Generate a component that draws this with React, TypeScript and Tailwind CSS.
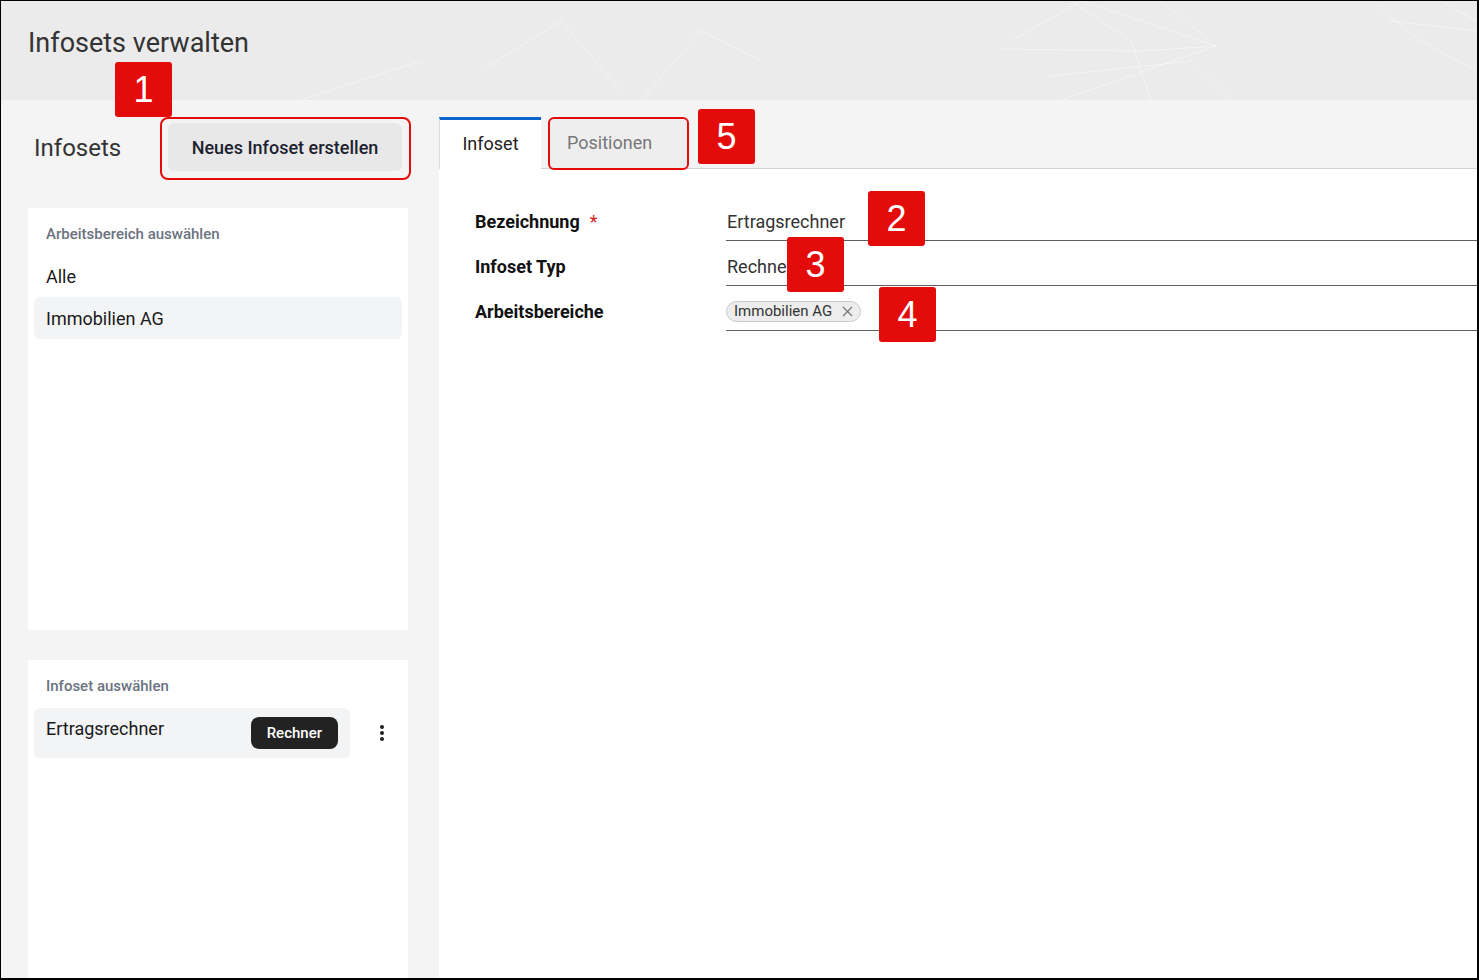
import React from "react";

const Badge = ({ n, className }: { n: string; className: string }) => (
  <div
    className={`absolute w-[57px] h-[55px] rounded-[3px] bg-[#e40b0b] text-white flex items-center justify-center text-[36px] leading-none font-['Liberation_Sans',Arial,sans-serif] ${className}`}
  >
    {n}
  </div>
);

const HeaderLines = () => (
  <svg
    className="absolute inset-0 w-full h-full"
    viewBox="0 0 1476 99"
    preserveAspectRatio="none"
  >
    <g stroke="#ffffff" strokeOpacity="0.45" strokeWidth="1" fill="none">
      <path d="M1010 40 L1080 0 L1215 45 L1060 99" />
      <path d="M1000 48 L1140 50 L1215 45" />
      <path d="M1070 0 L1130 40 L1150 99" />
      <path d="M1160 0 L1210 40" />
      <path d="M1050 75 L1190 60 L1230 99" />
      <path d="M1370 0 L1420 40 L1476 70" />
      <path d="M1390 20 L1476 30" />
      <path d="M1440 0 L1476 20" />
      <path d="M640 99 L700 30 L760 60" />
      <path d="M480 70 L560 20 L620 90" />
      <path d="M300 99 L420 60" />
    </g>
  </svg>
);

const FormRow = ({
  label,
  required,
  children,
}: {
  label: string;
  required?: boolean;
  children: React.ReactNode;
}) => (
  <div className="flex h-[45px]">
    <div className="w-[251px] flex items-center pt-[6px] text-[18px] font-bold text-[#111]">
      {label}
      {required && <span className="ml-[10px] text-[#d21c1c] font-normal">*</span>}
    </div>
    <div className="flex-1 flex items-center pt-[6px] border-b border-[#5f5f5f] text-[18px] text-[#333]">
      {children}
    </div>
  </div>
);

export default function App() {
  return (
    <div className="relative w-[1479px] h-[980px] overflow-hidden border-t border-l border-r-2 border-b-2 border-black flex flex-col font-['Roboto',sans-serif] bg-[#f4f4f4]">
      <header className="relative h-[99px] bg-[#ebebeb] shrink-0">
        <HeaderLines />
        <h1 className="relative pl-[27px] pt-[26px] text-[27px] leading-[32px] text-[#333]">
          Infosets verwalten
        </h1>
      </header>

      <div className="flex flex-1 min-h-0">
        {/* left column */}
        <aside className="w-[438px] shrink-0 flex flex-col pl-[27px]">
          <div className="flex items-center pt-[24px] h-[72px]">
            <div className="w-[140px] pl-[6px] text-[24px] text-[#333]">Infosets</div>
            <button className="w-[234px] h-[48px] rounded-md bg-[#e8e8e8] text-[18px] font-medium text-[#1c2230] -mt-[2px]">
              Neues Infoset erstellen
            </button>
          </div>

          <section className="mt-[36px] w-[380px] h-[422px] bg-white px-[6px] pt-[16px]">
            <div className="px-[12px] text-[15px] leading-[20px] font-medium text-[#6b7280]">
              Arbeitsbereich auswählen
            </div>
            <ul className="mt-[11px] text-[18px] text-[#1a1a1a]">
              <li className="h-[42px] flex items-center px-[12px]">Alle</li>
              <li className="h-[42px] flex items-center px-[12px] rounded-md bg-[#f3f4f6]">
                Immobilien AG
              </li>
            </ul>
          </section>

          <section className="mt-[30px] w-[380px] flex-1 bg-white px-[6px] pt-[16px]">
            <div className="px-[12px] text-[15px] leading-[20px] font-medium text-[#6b7280]">
              Infoset auswählen
            </div>
            <div className="mt-[12px] flex items-center">
              <div className="w-[316px] h-[50px] rounded-md bg-[#f3f4f6] flex items-center justify-between pl-[12px] pr-[12px]">
                <span className="text-[18px] text-[#1a1a1a] -mt-[10px]">Ertragsrechner</span>
                <span className="h-[32px] px-[16px] rounded-lg bg-[#222] text-white text-[15px] font-medium flex items-center">
                  Rechner
                </span>
              </div>
              <div className="ml-[30px] flex flex-col gap-[2px] items-center">
                <span className="w-[4px] h-[4px] rounded-full bg-[#222]" />
                <span className="w-[4px] h-[4px] rounded-full bg-[#222]" />
                <span className="w-[4px] h-[4px] rounded-full bg-[#222]" />
              </div>
            </div>
          </section>
        </aside>

        {/* right panel */}
        <main className="flex-1 flex flex-col">
          <div className="flex items-end pt-[17px] h-[69px] border-b border-[#d4d4d4]">
            <div className="w-[102px] h-[52px] -mb-px bg-white border-t-[3px] border-[#0a66cc] border-l border-l-[#dcdcdc] flex items-center justify-center text-[18px] text-[#222] pb-[2px]">
              Infoset
            </div>
            <div className="ml-[8px] w-[138px] h-[49px] rounded-t bg-[#eeeeee] flex items-center pl-[18px] text-[18px] text-[#777] pb-[2px]">
              Positionen
            </div>
          </div>
          <div className="flex-1 bg-white pl-[36px] pt-[27px]">
            <FormRow label="Bezeichnung" required>
              <span className="pl-px">Ertragsrechner</span>
            </FormRow>
            <FormRow label="Infoset Typ">
              <span className="pl-px">Rechner</span>
            </FormRow>
            <FormRow label="Arbeitsbereiche">
              <span className="h-[21px] px-[7px] rounded-full border border-[#c9c9c9] bg-[#ededed] text-[15px] text-[#333] flex items-center gap-[10px]">
                Immobilien AG
                <svg width="11" height="11" viewBox="0 0 11 11" stroke="#777" strokeWidth="1.3">
                  <path d="M1 1 L10 10 M10 1 L1 10" />
                </svg>
              </span>
            </FormRow>
          </div>
        </main>
      </div>

      {/* annotations */}
      <div className="absolute left-[159px] top-[116px] w-[251px] h-[63px] rounded-lg border-2 border-[#e40b0b]" />
      <div className="absolute left-[547px] top-[116px] w-[141px] h-[53px] rounded-md border-2 border-[#e40b0b]" />
      <Badge n="1" className="left-[114px] top-[61px]" />
      <Badge n="5" className="left-[697px] top-[108px]" />
      <Badge n="2" className="left-[867px] top-[190px]" />
      <Badge n="3" className="left-[786px] top-[236px]" />
      <Badge n="4" className="left-[878px] top-[286px]" />
    </div>
  );
}
